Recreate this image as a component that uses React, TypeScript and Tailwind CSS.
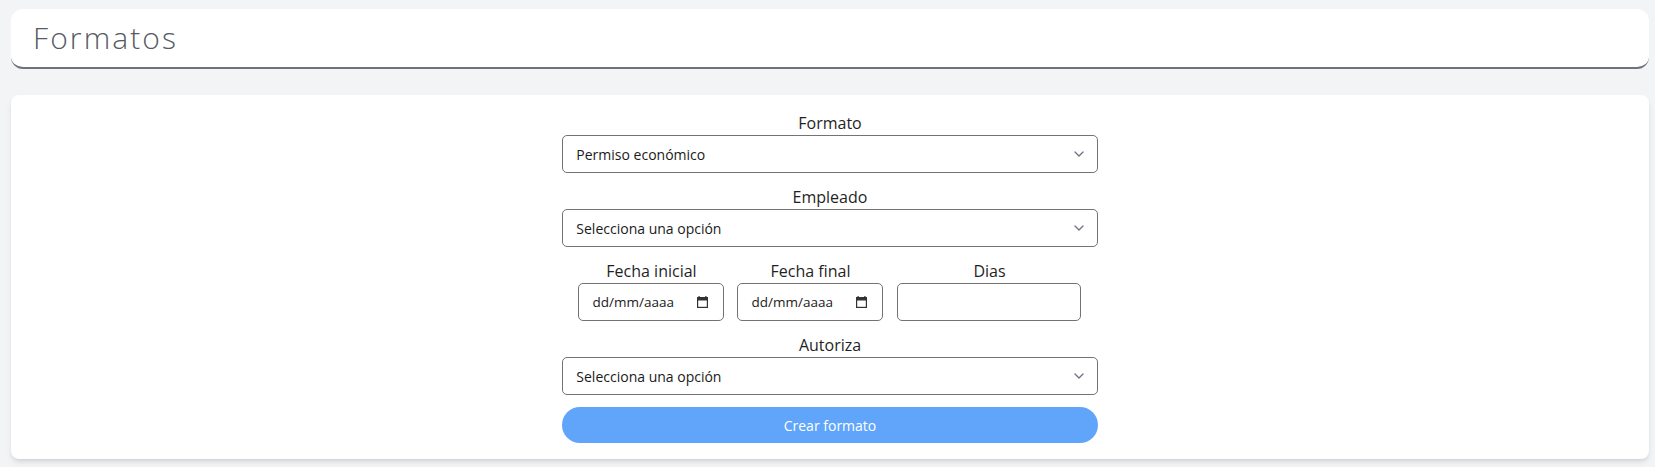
import React from "react";

function Chevron() {
  return (
    <svg width="10" height="6" viewBox="0 0 10 6" fill="none" className="shrink-0">
      <path d="M1 1L5 5L9 1" stroke="#6b7280" strokeWidth="1.3" strokeLinecap="round" strokeLinejoin="round" />
    </svg>
  );
}

function CalendarIcon() {
  return (
    <svg width="11" height="12" viewBox="0 0 11 12" fill="none" className="shrink-0">
      <rect x="1.5" y="0" width="1.2" height="2" fill="#333" />
      <rect x="8.3" y="0" width="1.2" height="2" fill="#333" />
      <rect x="0.6" y="1.6" width="9.8" height="9.8" stroke="#333" strokeWidth="1.2" />
      <rect x="0" y="1.5" width="11" height="3" fill="#333" />
    </svg>
  );
}

function Field({ label, value }: { label: string; value: string }) {
  return (
    <div className="mb-3 flex flex-col">
      <label className="text-center text-[16px] leading-6 text-[#1f1f1f]">{label}</label>
      <div className="flex h-[38px] items-center justify-between rounded-[5px] border border-[#737373] bg-white pl-[13px] pr-[13px]">
        <span className="text-[14px] text-[#1a1a1a]">{value}</span>
        <Chevron />
      </div>
    </div>
  );
}

function DateField({ label }: { label: string }) {
  return (
    <div className="flex w-[146px] flex-col">
      <label className="text-center text-[16px] leading-6 text-[#1f1f1f]">{label}</label>
      <div className="flex h-[38px] items-center justify-between rounded-[5px] border border-[#737373] bg-white pl-[13px] pr-[15px]">
        <span className="text-[13.5px] text-[#1a1a1a]">dd/mm/aaaa</span>
        <CalendarIcon />
      </div>
    </div>
  );
}

export default function App() {
  return (
    <div
      className="min-h-screen bg-[#f3f4f6] pb-2 pl-[11px] pr-[6px] pt-[9px]"
      style={{ fontFamily: '"Open Sans", "Noto Sans", sans-serif' }}
    >
      <div className="rounded-xl border-b-2 border-[#6b7280] bg-white px-[22px] py-[11px]">
        <h1 className="text-[30px] font-light leading-9 tracking-[0.07em] text-[#555b63]">Formatos</h1>
      </div>
      <div className="mt-[26px] rounded-lg bg-white p-4 shadow-md">
        <div className="mx-auto flex w-1/3 flex-col">
          <Field label="Formato" value="Permiso económico" />
          <Field label="Empleado" value="Selecciona una opción" />
          <div className="mb-3 flex justify-center gap-[13px]">
            <DateField label="Fecha inicial" />
            <DateField label="Fecha final" />
            <div className="ml-px flex w-[184px] flex-col">
              <label className="text-center text-[16px] leading-6 text-[#1f1f1f]">Dias</label>
              <div className="h-[38px] rounded-[5px] border border-[#737373] bg-white" />
            </div>
          </div>
          <Field label="Autoriza" value="Selecciona una opción" />
          <button className="h-9 w-full rounded-full bg-[#60a5fa] text-[14px] text-white">Crear formato</button>
        </div>
      </div>
    </div>
  );
}
